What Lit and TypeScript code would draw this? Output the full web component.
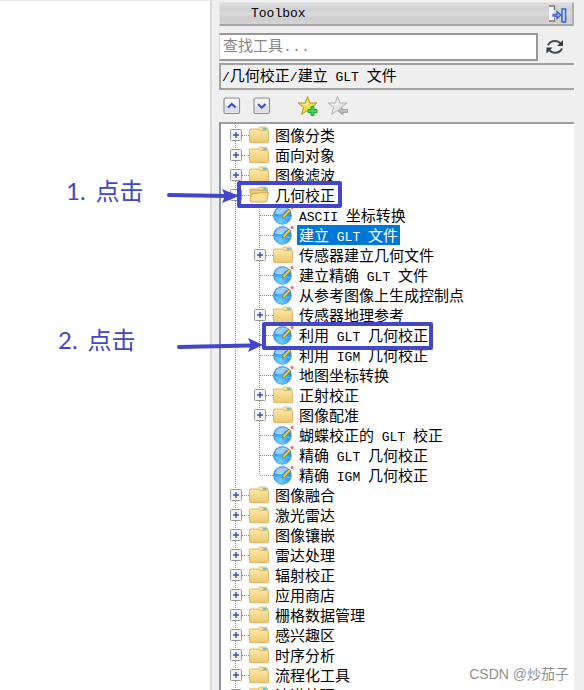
import { LitElement, html, svg, css, nothing } from "lit";
import { customElement, state } from "lit/decorators.js";

interface TreeNode {
  name: string;
  folder?: boolean;
  open?: boolean;
  selected?: boolean;
  children?: TreeNode[];
}

const folder = (name: string): TreeNode => ({ name, folder: true });
const tool = (name: string): TreeNode => ({ name });

const TREE: TreeNode[] = [
  folder("图像分类"),
  folder("面向对象"),
  folder("图像滤波"),
  {
    name: "几何校正",
    folder: true,
    open: true,
    children: [
      tool("ASCII 坐标转换"),
      { name: "建立 GLT 文件", selected: true },
      folder("传感器建立几何文件"),
      tool("建立精确 GLT 文件"),
      tool("从参考图像上生成控制点"),
      folder("传感器地理参考"),
      tool("利用 GLT 几何校正"),
      tool("利用 IGM 几何校正"),
      tool("地图坐标转换"),
      folder("正射校正"),
      folder("图像配准"),
      tool("蝴蝶校正的 GLT 校正"),
      tool("精确 GLT 几何校正"),
      tool("精确 IGM 几何校正"),
    ],
  },
  folder("图像融合"),
  folder("激光雷达"),
  folder("图像镶嵌"),
  folder("雷达处理"),
  folder("辐射校正"),
  folder("应用商店"),
  folder("栅格数据管理"),
  folder("感兴趣区"),
  folder("时序分析"),
  folder("流程化工具"),
  folder("波谱处理"),
];

/* Latin runs are set in the monospace face, one step smaller than the Chinese. */
const mixed = (text: string) =>
  text
    .split(/([\x20-\x7e]+)/)
    .filter((part) => part)
    .map((part) => (/^[\x20-\x7e]/.test(part) ? html`<span class="latin">${part}</span>` : part));

const closedFolder = html`<svg class="icon" viewBox="0 0 20 18" aria-hidden="true">
  <defs>
    <linearGradient id="f" x1="0" y1="0" x2="0" y2="1">
      <stop offset="0" stop-color="#fde9a8" />
      <stop offset="1" stop-color="#ecc970" />
    </linearGradient>
  </defs>
  <path d="M9 5V2.5L10.5 1H17l1.5 1.5V6H9z" fill="#f6e2a6" stroke="#d9b667" stroke-width=".8" />
  <path d="M14 2h3.500v1.800H14z" fill="#4cc8d6" />
  <path d="M.6 3.6Q.6 3 1.2 3h7.6l1.4 1.4h8.6q.7 0 .7.7v10.8q0 .7-.7.7H1.2q-.6 0-.6-.7z" fill="url(#f)" stroke="#d8b05c" stroke-width=".9" />
</svg>`;

const openFolder = html`<svg class="icon" viewBox="0 0 20 18" aria-hidden="true">
  <path d="M9 5V2.5L10.5 1H17l1.5 1.5V8H9z" fill="#f3dc98" stroke="#d3ab58" stroke-width=".8" />
  <path d="M14 2h3.500v1.800H14z" fill="#4cc8d6" />
  <path d="M.8 3h8l1.4 1.4h7.4V15H2z" fill="#e9c772" stroke="#cfa14a" stroke-width=".8" />
  <path d="M3.4 7.6h5.8l1.2-1h9.1l-2 9.4H1.6L.8 13z" fill="#fbdf96" stroke="#d3a850" stroke-width=".9" />
</svg>`;

const globe = html`<svg class="icon globe" viewBox="0 0 21 20" aria-hidden="true">
  <defs>
    <radialGradient id="g" cx=".4" cy=".85" r=".9">
      <stop offset="0" stop-color="#6fd0ff" />
      <stop offset=".5" stop-color="#3a9fec" />
      <stop offset="1" stop-color="#2b7fd2" />
    </radialGradient>
  </defs>
  <circle cx="9.4" cy="10.4" r="9" fill="url(#g)" stroke="#4c93d2" stroke-width=".6" />
  <path d="M1.800 8.200Q3.600 2.400 9.400 2.200q4 0 5.800 2.200-4 1.600-5 4-3.600 1.800-8.400-.2z" fill="#b5dcf9" opacity=".8" />
  <path d="M1.600 12q4 2.600 8.400.6 3.800-1.600 7.600.4" fill="none" stroke="#9adcff" stroke-width="1" opacity=".6" />
  <path d="M9.800 10.800 16 4l1.800 1.800-6.200 6.600-2.400.6z" fill="#f2d24c" stroke="#6d6a2c" stroke-width=".7" />
  <path d="m17.200 2.400 1.300-1.400q1.200-.4 1.900.7t-.2 1.800l-1.200 1.100z" fill="#ee6870" />
</svg>`;

const star = (fill: string, edge: string, mark: unknown) => html`<svg viewBox="0 0 22 22" width="22" height="22" aria-hidden="true">
  <path d="M10.500 1.500 13 8h7l-5.600 4.400 2.100 7.100-6-4.200-6 4.200 2.100-7.100L1 8h7z" fill=${fill} stroke=${edge} stroke-width="1" stroke-linejoin="round" />
  <path d="M10.500 4v7L3.500 9H9z" fill="#fff" opacity=".5" />
  ${mark}
</svg>`;

const plusMark = svg`<path d="M14 11.500h3v3h3v3h-3v3h-3v-3h-3v-3h3z" fill="#3fd850" stroke="#179a2a" stroke-width=".9" />`;
const minusMark = svg`<path d="m11 16 4-3.500v2h5.500v3H15v2z" fill="#bcbcbc" stroke="#9a9a9a" stroke-width=".8" />`;

@customElement("app-root")
export class AppRoot extends LitElement {
  static styles = css`
    :host {
      display: flex;
      position: relative;
      height: 100vh;
      overflow: hidden;
      box-sizing: border-box;
      background: #efefef;
      color: #000;
      font: 15px/20px "Noto Sans CJK SC", sans-serif;
    }
    * {
      box-sizing: border-box;
    }
    button {
      padding: 0;
      border: 0;
      background: none;
      font: inherit;
      line-height: 0;
    }
    .latin {
      font-family: "Liberation Mono", monospace;
      font-size: 13px;
      line-height: 1;
      white-space: pre;
    }
    .canvas {
      flex: 0 0 212px;
      background: #fff;
      border-top: 1px solid #e6e6e6;
      border-right: 2px solid #d9d9d9;
    }
    .panel {
      flex: 1;
      min-width: 0;
      display: flex;
      flex-direction: column;
      padding: 2px 10px 0 7px;
    }
    .title {
      display: flex;
      flex: none;
      align-items: center;
      justify-content: space-between;
      height: 24px;
      padding: 0 5px 0 31px;
      background: linear-gradient(#dedede, #cfcfcf 30%, #d9d9d9 50%, #cdcdcd 75%, #d4d4d4);
      border: 1px solid #e4e4e4;
      border-right: 2px solid #b0b0b0;
      border-bottom: 2px solid #a6a6a6;
    }
    .title h1 {
      margin: 0;
      font-size: 13px;
      font-weight: 400;
    }
    .search {
      display: flex;
      flex: none;
      align-items: center;
      gap: 7px;
      margin-top: 7px;
      padding-right: 9px;
    }
    .search input {
      flex: 1;
      min-width: 0;
      height: 28px;
      padding: 0 3px;
      border: 2px solid #999;
      border-left: 1px solid #d8d8d8;
      border-radius: 0;
      background: #fff;
      outline: 0;
      font: 15px "Liberation Mono", "Noto Sans CJK SC", monospace;
    }
    .search input::placeholder {
      color: #858585;
      opacity: 1;
    }
    .path {
      flex: none;
      height: 27px;
      margin-top: 2px;
      padding: 0 1px;
      border: solid #a2a2a2;
      border-width: 2px 0 2px 2px;
      line-height: 20px;
    }
    .tools {
      display: flex;
      flex: none;
      align-items: center;
      height: 32px;
      padding-left: 4px;
      gap: 12px;
    }
    .stars {
      display: flex;
      gap: 8px;
      margin-left: 14px;
    }
    .tree-box {
      flex: 1;
      min-height: 0;
      overflow: hidden;
      padding: 1px 0 0 9px;
      background: #fff;
      border-top: 2px solid #9c9ea6;
      border-left: 2px solid #8e949c;
    }
    ul {
      margin: 0;
      padding: 0;
      list-style: none;
      background: repeating-linear-gradient(#8a8a8a 0 1px, #fff 1px 2px) 5px 0 / 1px 100% no-repeat;
    }
    ul ul {
      margin-left: 24px;
      background-size: 1px calc(100% - 10px);
    }
    .row {
      display: flex;
      align-items: center;
      height: 20px;
      white-space: nowrap;
    }
    .expander {
      flex: none;
      width: 12px;
      height: 12px;
    }
    .stub {
      flex: none;
      width: 7px;
      height: 1px;
      background: repeating-linear-gradient(90deg, #8a8a8a 0 1px, transparent 1px 2px);
    }
    .stub.long {
      width: 13px;
      margin-left: 6px;
    }
    .icon {
      flex: none;
      width: 20px;
      height: 18px;
    }
    .globe {
      width: 21px;
      height: 20px;
      margin-right: -1px;
    }
    .name {
      height: 20px;
      margin-left: 4px;
      padding: 0 2px;
      line-height: 19px;
    }
    .name.selected {
      background: #0078d7;
      color: #fff;
    }
    .frame,
    .arrow,
    .note,
    .mark {
      position: absolute;
      pointer-events: none;
    }
    .frame {
      border: 4px solid #4146cb;
      border-radius: 2px;
    }
    .frame.first {
      left: 237px;
      top: 181px;
      width: 105px;
      height: 27px;
    }
    .frame.second {
      left: 262px;
      top: 322px;
      width: 171px;
      height: 28px;
    }
    .arrow {
      height: 16px;
    }
    .arrow.first {
      left: 166px;
      top: 188px;
      width: 74px;
    }
    .arrow.second {
      left: 176px;
      top: 337px;
      width: 88px;
    }
    .note {
      display: flex;
      align-items: baseline;
      gap: 10px;
      color: #4146cb;
      font: 24px/32px Lato, "Noto Sans CJK SC", sans-serif;
    }
    .note.first {
      left: 66px;
      top: 175px;
    }
    .note.second {
      left: 58px;
      top: 324px;
    }
    .mark {
      right: 15px;
      bottom: 6px;
      color: #8f8f8f;
      font: 14px/20px "Liberation Sans", "Noto Sans CJK SC", sans-serif;
    }
  `;

  @state() private nodes: TreeNode[] = TREE;

  private toggle(node: TreeNode) {
    node.open = !node.open;
    this.nodes = [...this.nodes];
  }

  private renderNode(node: TreeNode): unknown {
    return html`<li>
      <div class="row">
        ${node.folder
          ? html`<button class="expander" aria-label=${node.name} aria-expanded=${node.open ? "true" : "false"} @click=${() => this.toggle(node)}>
                <svg width="12" height="12" viewBox="0 0 12 12" aria-hidden="true">
                  <rect x=".5" y=".5" width="11" height="11" rx="1" fill="#f4f4f4" stroke="#969696" />
                  <path d=${node.open ? "M3 6h6" : "M3 6h6M6 3v6"} stroke="#35509c" stroke-width="1.400" />
                </svg></button
              ><span class="stub"></span>${node.open ? openFolder : closedFolder}`
          : html`<span class="stub long"></span>${globe}`}
        <span class="name ${node.selected ? "selected" : ""}">${mixed(node.name)}</span>
      </div>
      ${node.open && node.children ? html`<ul>${node.children.map((c) => this.renderNode(c))}</ul>` : nothing}
    </li>`;
  }

  private stepButton(label: string, d: string) {
    return html`<button aria-label=${label}>
      <svg width="18" height="18" viewBox="0 0 18 18" aria-hidden="true">
        <rect x="1" y="1" width="15.500" height="15.500" rx="1.500" fill="#f3f3f3" stroke="#8d8d8d" stroke-width="1.200" />
        <path d="M2 9h13.500v6.500H2z" fill="#dedede" />
        <path d=${d} fill="none" stroke="#2f57c8" stroke-width="2.200" />
      </svg>
    </button>`;
  }

  render() {
    return html`
      <div class="canvas"></div>
      <section class="panel">
        <header class="title">
          <h1 class="latin">Toolbox</h1>
          <button aria-label="Dock">
            <svg width="19" height="18" viewBox="0 0 19 18" aria-hidden="true">
              <path d="M1 1h5v15H1z" fill="#f4f4f4" />
              <path d="M1 1h5.500v4M6.500 13v3H1" fill="none" stroke="#777" stroke-width="1.300" />
              <path d="M5 9.200h4V6.400L13 10l-4 3.600v-2.500H5z" fill="#8fb2f3" stroke="#2d53d0" stroke-width="1.100" />
              <path d="M14 4h3.600v13H14z" fill="#c4dcfb" stroke="#3563e0" stroke-width="1.500" />
            </svg>
          </button>
        </header>
        <div class="search">
          <input type="text" aria-label="查找工具" placeholder="查找工具..." />
          <button aria-label="刷新">
            <svg width="20" height="18" viewBox="0 0 20 18" aria-hidden="true">
              <g fill="none" stroke="#454b57" stroke-width="2">
                <path d="M3 7.200Q5 3 10 3q3.600 0 5.600 2.600" />
                <path d="M17 10.500Q15 14.800 10 14.800q-3.600 0-5.600-2.600" />
              </g>
              <path d="M18 2v6h-6zM1.500 15.500V9.500h6z" fill="#353c49" />
            </svg>
          </button>
        </div>
        <div class="path">${mixed("/几何校正/建立 GLT 文件")}</div>
        <div class="tools">
          ${this.stepButton("上一个", "M5 10.500 8.800 7l3.800 3.500")} ${this.stepButton("下一个", "M5 7l3.800 3.500L12.600 7")}
          <div class="stars">
            <button aria-label="添加收藏">${star("#f3dc3e", "#b09a30", plusMark)}</button>
            <button aria-label="移除收藏">${star("#e4e4e4", "#b4b4b4", minusMark)}</button>
          </div>
        </div>
        <div class="tree-box">
          <ul>
            ${this.nodes.map((n) => this.renderNode(n))}
          </ul>
        </div>
      </section>

      <div class="frame first"></div>
      <div class="frame second"></div>
      <svg class="arrow first" viewBox="0 0 74 16" aria-hidden="true">
        <path d="M3 7 60 8" stroke="#4146cb" stroke-width="4" stroke-linecap="round" />
        <path d="M56 1 73 8 56 15l3-7z" fill="#4146cb" />
      </svg>
      <svg class="arrow second" viewBox="0 0 88 16" aria-hidden="true">
        <path d="M3 10 74 8.500" stroke="#4146cb" stroke-width="4" stroke-linecap="round" />
        <path d="M72 1 87 8 72 15l3-7z" fill="#4146cb" />
      </svg>
      <div class="note first"><span>1.</span><span>点击</span></div>
      <div class="note second"><span>2.</span><span>点击</span></div>
      <div class="mark">CSDN @炒茄子</div>
    `;
  }
}
